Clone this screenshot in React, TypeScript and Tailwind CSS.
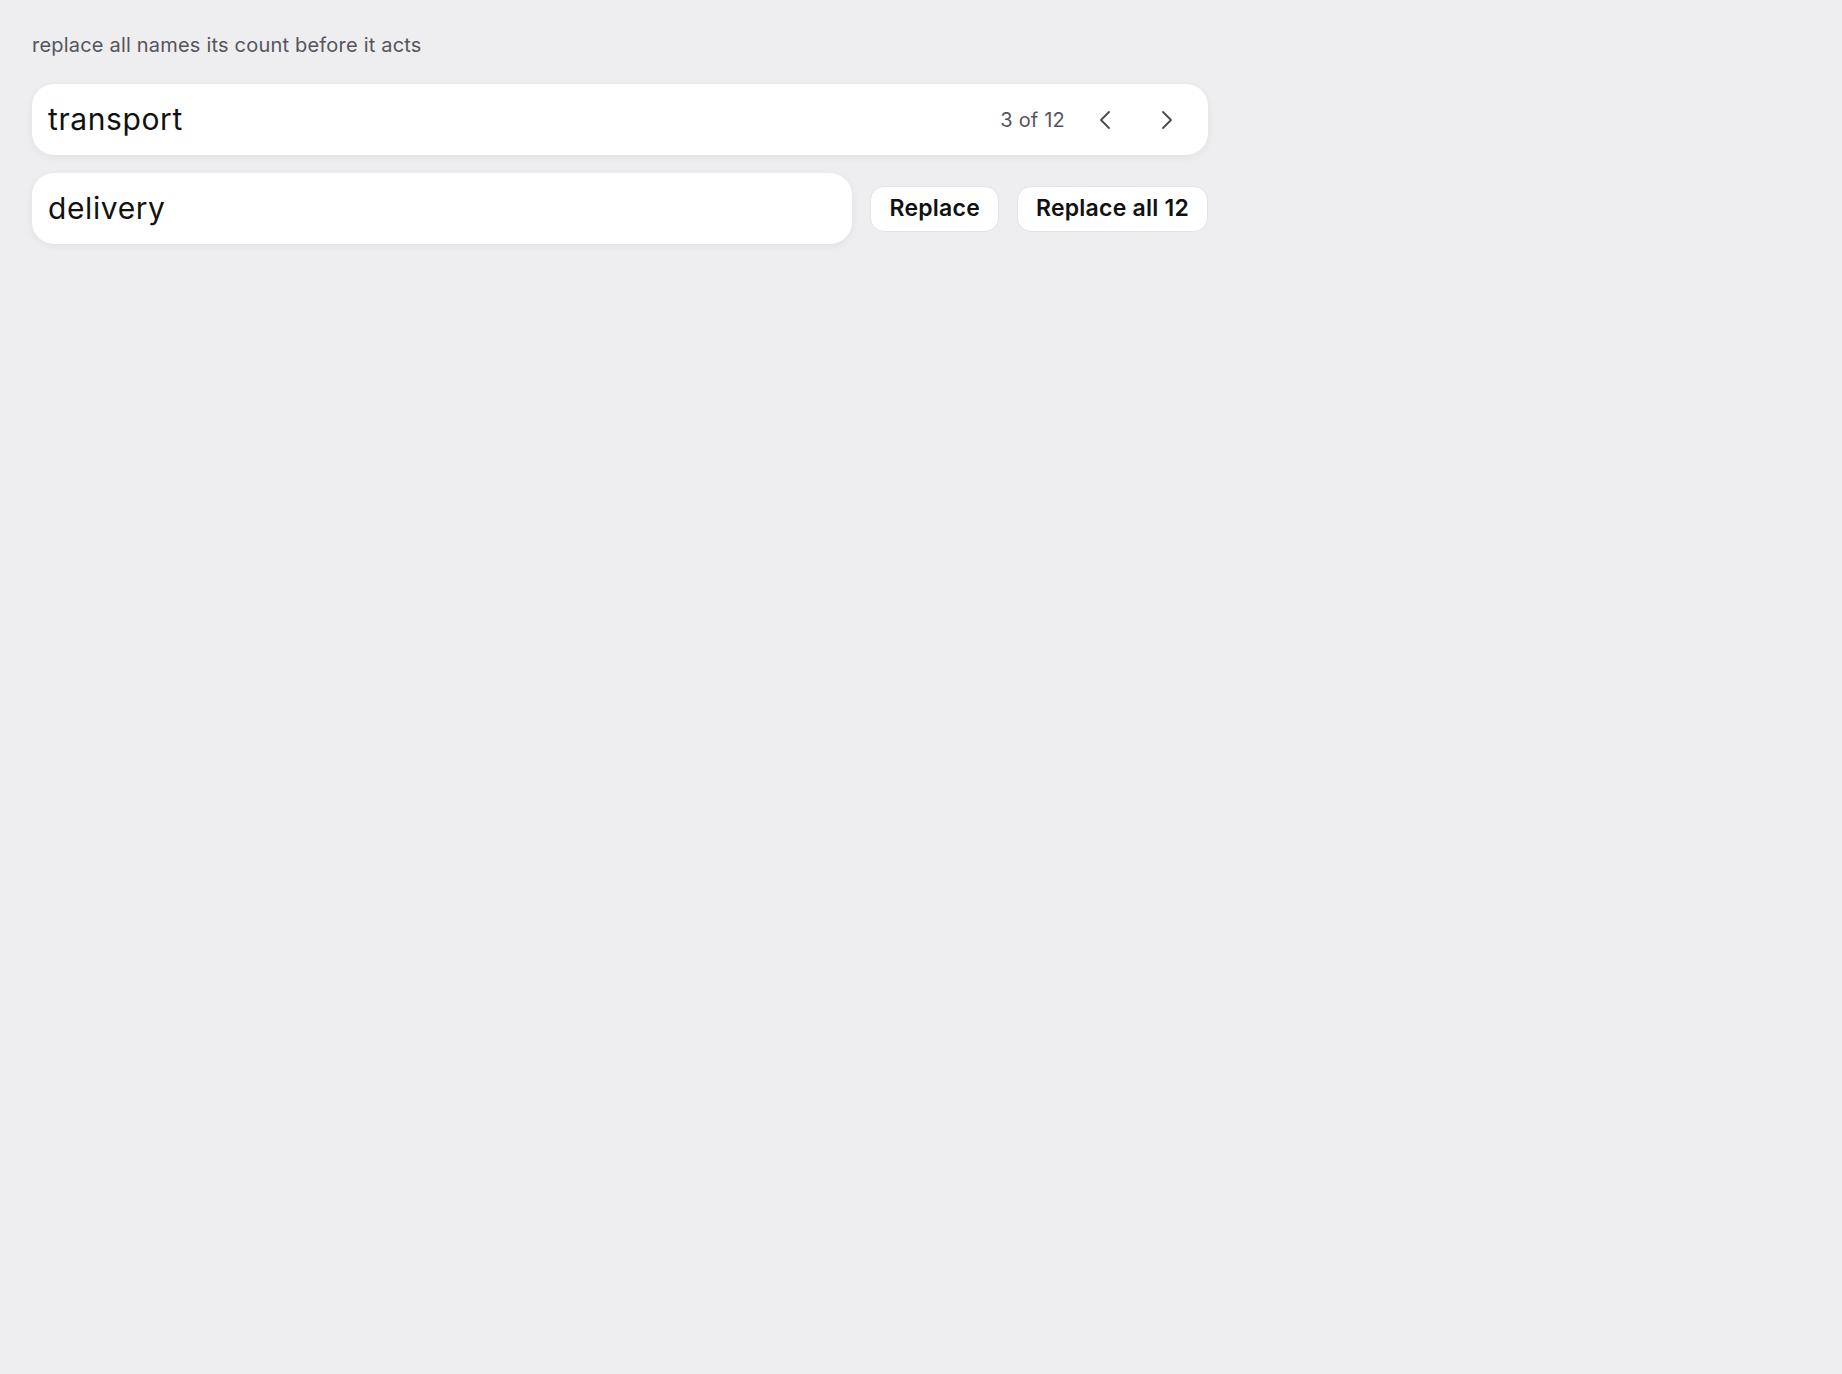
const font = { fontFamily: 'Inter, "Noto Sans", sans-serif' };

const Chevron = ({ dir }: { dir: 'left' | 'right' }) => (
	<svg width="12" height="20" viewBox="0 0 12 20" fill="none" stroke="currentColor" strokeWidth="1.8" strokeLinecap="round" strokeLinejoin="round">
		{dir === 'left' ? <polyline points="10,2 2,10 10,18" /> : <polyline points="2,2 10,10 2,18" />}
	</svg>
);

export default function App() {
	return (
		<div className="min-h-screen bg-[#eeeef0] px-8 pt-[32px]" style={font}>
			<div className="w-[1176px]">
				<p className="text-[20px] leading-[26px] tracking-[0.01em] text-[#55555c]">replace all names its count before it acts</p>

				<div className="mt-[26px] flex h-[71px] items-center rounded-[22px] bg-white pl-4 pr-[21px] shadow-[0_2px_8px_rgba(0,0,0,0.06)]">
					<span className="flex-1 text-[30px] tracking-[0.02em] text-[#111]">transport</span>
					<span className="text-[20px] tracking-[0.01em] text-[#55555c]">3 of 12</span>
					<button className="ml-5 flex h-10 w-10 items-center justify-center text-[#48484f]">
						<Chevron dir="left" />
					</button>
					<button className="ml-[22px] flex h-10 w-10 items-center justify-center text-[#48484f]">
						<Chevron dir="right" />
					</button>
				</div>

				<div className="mt-[18px] flex items-center gap-[18px]">
					<div className="flex h-[71px] flex-1 items-center rounded-[22px] bg-white px-4 shadow-[0_2px_8px_rgba(0,0,0,0.06)]">
						<span className="text-[30px] tracking-[0.02em] text-[#111]">delivery</span>
					</div>
					<button className="h-[46px] rounded-[14px] border border-[#e3e3e6] bg-white px-[18px] text-[23px] font-semibold tracking-[0.01em] text-[#111]">
						Replace
					</button>
					<button className="h-[46px] rounded-[14px] border border-[#e3e3e6] bg-white px-[18px] text-[23px] font-semibold tracking-[0.01em] text-[#111]">
						Replace all 12
					</button>
				</div>
			</div>
		</div>
	);
}
